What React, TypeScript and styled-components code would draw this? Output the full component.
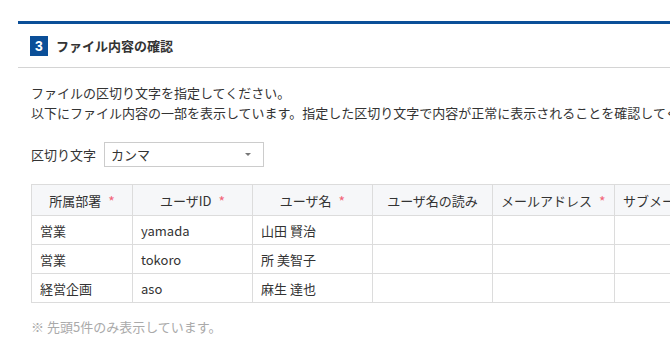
import styled, { createGlobalStyle } from 'styled-components';

const GlobalStyle = createGlobalStyle`
	body {
		margin: 0;
		overflow: hidden;
		background: #fff;
		font-family: 'Noto Sans CJK JP', 'Noto Sans', sans-serif;
		font-size: 13px;
		color: #333;
	}
`;

const Page = styled.div`
	padding: 21px 0 0 18px;
	width: max-content;
	min-width: 652px;
`;

const Section = styled.section`
	border-top: 3px solid #0b4f98;
`;

const Header = styled.div`
	display: flex;
	align-items: center;
	gap: 8px;
	height: 43px;
	padding-left: 12px;
	border-bottom: 1px solid #d4d4d4;
`;

const Badge = styled.span`
	display: flex;
	align-items: center;
	justify-content: center;
	width: 18px;
	height: 20px;
	background: #0b4f98;
	color: #fff;
	font-family: 'Liberation Sans', sans-serif;
	font-weight: bold;
	font-size: 14px;
`;

const Title = styled.h2`
	margin: 0;
	font-size: 13px;
	font-weight: bold;
	color: #333;
`;

const Body = styled.div`
	padding: 15px 13px 0;
`;

const Text = styled.p`
	margin: 0;
	line-height: 20px;
	white-space: nowrap;
`;

const SelectRow = styled.div`
	display: flex;
	align-items: center;
	gap: 8px;
	margin-top: 19px;
`;

const Select = styled.div`
	display: flex;
	align-items: center;
	justify-content: space-between;
	box-sizing: border-box;
	width: 160px;
	height: 25px;
	padding: 0 12px 0 6px;
	border: 1px solid #ccc;
	background: #fff;
`;

const Caret = styled.span`
	width: 0;
	height: 0;
	border-left: 3px solid transparent;
	border-right: 3px solid transparent;
	border-top: 3px solid #777;
`;

const Table = styled.table`
	margin-top: 17px;
	border-collapse: collapse;
	table-layout: fixed;
`;

const Th = styled.th<{ $w: number }>`
	width: ${(p) => p.$w}px;
	height: 31px;
	padding: 0 8px;
	box-sizing: border-box;
	border: 1px solid #dcdcdc;
	background: #f6f7f9;
	font-weight: normal;
	text-align: center;
	white-space: nowrap;
`;

const Td = styled.td`
	height: 28px;
	padding: 0 8px;
	border: 1px solid #dcdcdc;
	white-space: nowrap;
`;

const Required = styled.span`
	display: inline-block;
	margin-left: 7px;
	color: #f26478;
	font-size: 14px;
	line-height: 1;
	vertical-align: -1px;
`;

const Note = styled.p`
	margin: 14px 0 0;
	line-height: 20px;
	color: #aaa;
`;

const columns = [
	{ label: '所属部署', required: true, w: 101 },
	{ label: 'ユーザID', required: true, w: 120 },
	{ label: 'ユーザ名', required: true, w: 120 },
	{ label: 'ユーザ名の読み', required: false, w: 120 },
	{ label: 'メールアドレス', required: true, w: 120 },
	{ label: 'サブメールアドレス', required: false, w: 135 },
];

const rows = [
	['営業', 'yamada', '山田 賢治', '', '', ''],
	['営業', 'tokoro', '所 美智子', '', '', ''],
	['経営企画', 'aso', '麻生 達也', '', '', ''],
];

function App() {
	return (
		<Page>
			<GlobalStyle />
			<Section>
				<Header>
					<Badge>3</Badge>
					<Title>ファイル内容の確認</Title>
				</Header>
				<Body>
					<Text>ファイルの区切り文字を指定してください。</Text>
					<Text>
						以下にファイル内容の一部を表示しています。指定した区切り文字で内容が正常に表示されることを確認してください。
					</Text>
					<SelectRow>
						<span>区切り文字</span>
						<Select>
							<span>カンマ</span>
							<Caret />
						</Select>
					</SelectRow>
					<Table>
						<thead>
							<tr>
								{columns.map((c) => (
									<Th key={c.label} $w={c.w}>
										{c.label}
										{c.required && <Required>*</Required>}
									</Th>
								))}
							</tr>
						</thead>
						<tbody>
							{rows.map((r, i) => (
								<tr key={i}>
									{r.map((v, j) => (
										<Td key={j}>{v}</Td>
									))}
								</tr>
							))}
						</tbody>
					</Table>
					<Note>※ 先頭5件のみ表示しています。</Note>
				</Body>
			</Section>
		</Page>
	);
}

export default App;
